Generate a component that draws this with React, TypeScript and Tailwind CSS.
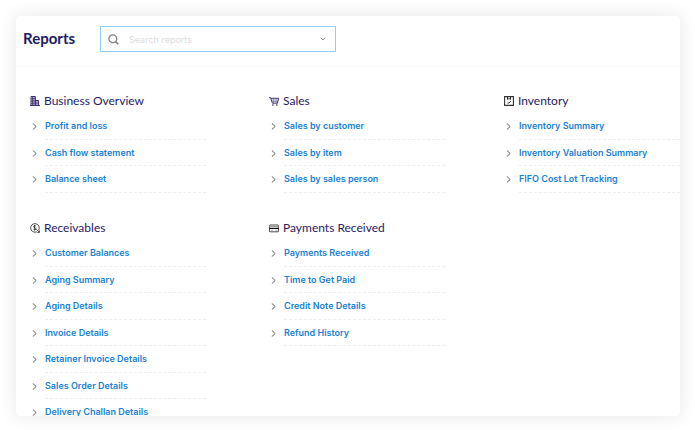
import type { ReactNode } from "react";

type Report = { title: string; icon: ReactNode; links: string[] };

function BuildingIcon() {
  return (
    <svg viewBox="0 0 10 10" className="size-2.5" fill="none" aria-hidden="true">
      <path d="M0 9.5h10M1 9.5V0.5h4.4v9M5.4 4.5h3.2v5" stroke="#2a2065" strokeWidth="0.9" />
      <path d="M2.5 0.5v9M4 0.5v9M1 2.4h4.4M1 4.2h4.4M1 6h4.4M1 7.8h4.4" stroke="#2a2065" strokeWidth="0.7" />
      <path d="M7 4.5v5M5.4 6.2h3.2M5.4 7.8h3.2" stroke="#2a2065" strokeWidth="0.6" />
    </svg>
  );
}

function CartIcon() {
  return (
    <svg viewBox="0 0 10 10" className="size-2.5" fill="none" aria-hidden="true">
      <path d="M0 1.7h1.6l1.8 5.5h5L9.7 2.3H1.9" stroke="#2a2065" strokeWidth="0.9" />
      <path d="M2.4 4h6.8M2.9 5.6h5.9M4.4 2.4l0.4 4.8M7.3 2.4L7 7.2" stroke="#2a2065" strokeWidth="0.4" />
      <circle cx="3.9" cy="9" r="0.8" fill="#2a2065" />
      <circle cx="7.8" cy="9" r="0.8" fill="#2a2065" />
    </svg>
  );
}

function BoxIcon() {
  return (
    <svg viewBox="0 0 10 10" className="size-2.5" fill="none" stroke="#333" aria-hidden="true">
      <path d="M0.6 0.6h8.8v8.8H0.6z" strokeWidth="1.1" />
      <path d="M3.5 0.8v2.6l1.5-0.8 1.5 0.8v-2.6" strokeWidth="1" />
      <path d="M3.4 7h1.6L6.9 5" strokeWidth="1" />
    </svg>
  );
}

function CoinIcon() {
  return (
    <svg viewBox="0 0 10 10" className="size-2.5" fill="none" stroke="#222" aria-hidden="true">
      <path d="M8.6 7.2A4.3 4.3 0 1 0 6.8 8.8" strokeWidth="0.8" />
      <path d="M5.7 3.1C5.3 2.5 3.6 2.5 3.6 3.7c0 1.2 2.3 0.8 2.3 2.1 0 1.2-1.9 1.2-2.5 0.4M4.7 1.9v5.7" strokeWidth="0.8" />
      <path d="M6.3 6.2l3 3M9.4 7.3v2.1H7.2" strokeWidth="0.8" />
    </svg>
  );
}

function CardIcon() {
  return (
    <svg viewBox="0 0 10 10" className="size-2.5" fill="none" aria-hidden="true">
      <rect x="0.4" y="2" width="9.2" height="6.8" rx="0.7" stroke="#333" strokeWidth="0.9" />
      <path d="M0.4 3.4h9.2" stroke="#999" strokeWidth="1" />
      <path d="M0.4 5.4h9.2" stroke="#111" strokeWidth="1.4" />
      <path d="M1.8 7.3h2.2M6.4 7.3h1.8" stroke="#888" strokeWidth="0.6" />
    </svg>
  );
}

const reports: Report[] = [
  {
    title: "Business Overview",
    icon: <BuildingIcon />,
    links: ["Profit and loss", "Cash flow statement", "Balance sheet"],
  },
  {
    title: "Sales",
    icon: <CartIcon />,
    links: ["Sales by customer", "Sales by item", "Sales by sales person"],
  },
  {
    title: "Inventory",
    icon: <BoxIcon />,
    links: ["Inventory Summary", "Inventory Valuation Summary", "FIFO Cost Lot Tracking"],
  },
  {
    title: "Receivables",
    icon: <CoinIcon />,
    links: [
      "Customer Balances",
      "Aging Summary",
      "Aging Details",
      "Invoice Details",
      "Retainer Invoice Details",
      "Sales Order Details",
      "Delivery Challan Details",
    ],
  },
  {
    title: "Payments Received",
    icon: <CardIcon />,
    links: ["Payments Received", "Time to Get Paid", "Credit Note Details", "Refund History"],
  },
];

function ReportSection({ title, icon, links }: Report) {
  return (
    <section className="w-44">
      <h2 className="flex h-6 items-center gap-1 whitespace-nowrap text-[12px] text-[#2a2065]">
        {icon}
        {title}
      </h2>
      <ul>
        {links.map((link) => (
          <li key={link} className="flex odd:h-[27px] even:h-[26px]">
            <span className="flex w-[15px] shrink-0 items-center pl-[2px]">
              <svg viewBox="0 0 5 7" className="h-[7px] w-[5px]" fill="none" aria-hidden="true">
                <path d="M0.8 0.4L4.2 3.5 0.8 6.6" stroke="#555" strokeWidth="0.9" />
              </svg>
            </span>
            <a
              href="#"
              className="flex flex-1 items-center whitespace-nowrap border-b border-dashed border-[#eeeeee] font-['Inter',sans-serif] text-[9px] font-semibold text-[#1a82d2] hover:underline"
            >
              {link}
            </a>
          </li>
        ))}
      </ul>
    </section>
  );
}

export default function App() {
  return (
    <div className="flex h-screen bg-white pt-4 pr-[15px] pb-[14px] pl-4 font-['Lato',sans-serif]">
      <main className="flex-1 overflow-hidden rounded-[4px] bg-white shadow-[0_0_18px_rgba(0,0,0,0.1)]">
        {/* Header */}
        <header className="flex h-[51px] items-center border-b border-[#f8f8f8] pb-1 pl-[7px]">
          <h1 className="w-[77px] pb-0.5 text-[15px] font-bold text-[#221a60]">Reports</h1>
          <div className="flex h-[26px] w-[236px] items-center border border-[#93cff6] pr-2 pl-[7px]">
            <svg viewBox="0 0 11 11" className="size-[11px] shrink-0" fill="none" aria-hidden="true">
              <circle cx="4.8" cy="4.8" r="3.9" stroke="#808080" strokeWidth="1.3" />
              <path d="M7.6 7.6l2.7 2.7" stroke="#808080" strokeWidth="1.6" />
            </svg>
            <input
              type="text"
              aria-label="Search reports"
              placeholder="Search reports"
              className="ml-[10px] min-w-0 flex-1 pt-px font-['Inter',sans-serif] text-[9px] outline-none placeholder:text-[#dcdcdc]"
            />
            <button type="button" aria-label="Show report list" className="flex size-2 items-center justify-center">
              <svg viewBox="0 0 6 4" className="h-1 w-1.5" fill="none" aria-hidden="true">
                <path d="M0.8 0.7L3 2.9 5.2 0.7" stroke="#777" strokeWidth="1" />
              </svg>
            </button>
          </div>
        </header>

        {/* Report groups */}
        <div className="grid grid-cols-[239fr_235fr_176fr] gap-y-[23px] pt-[22px] pl-[14px]">
          {reports.map((report) => (
            <ReportSection key={report.title} {...report} />
          ))}
        </div>
      </main>
    </div>
  );
}
